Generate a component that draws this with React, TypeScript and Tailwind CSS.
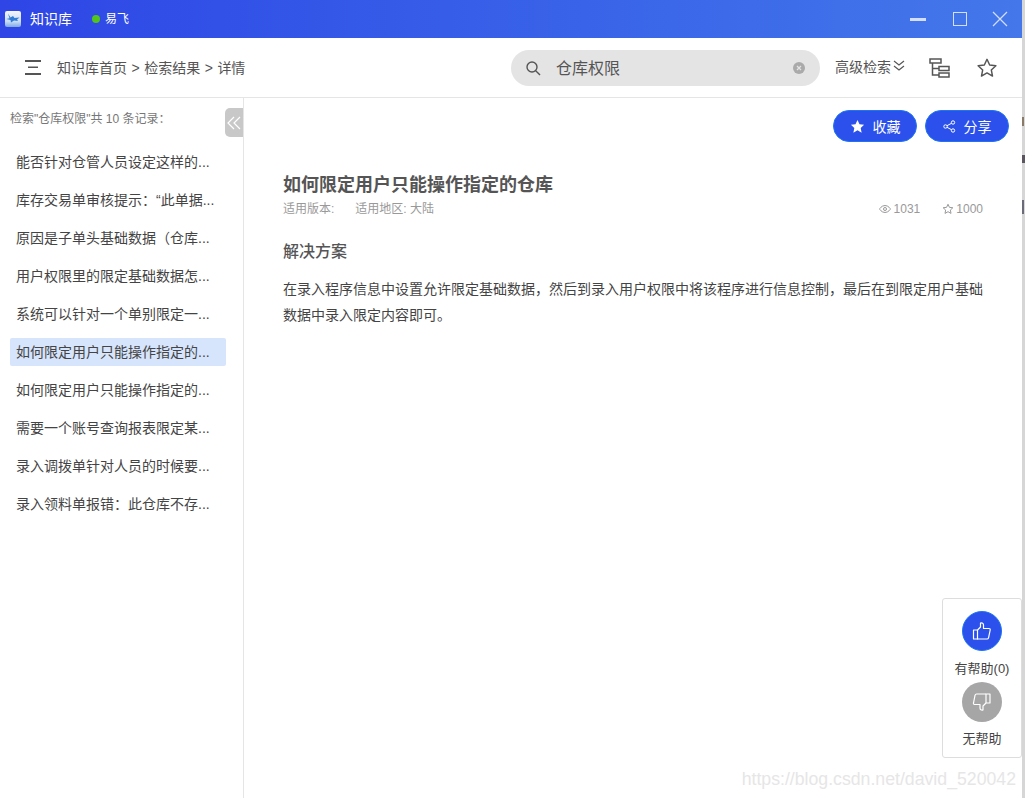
const results = [
  '能否针对仓管人员设定这样的...',
  '库存交易单审核提示：“此单据...',
  '原因是子单头基础数据（仓库...',
  '用户权限里的限定基础数据怎...',
  '系统可以针对一个单别限定一...',
  '如何限定用户只能操作指定的...',
  '如何限定用户只能操作指定的...',
  '需要一个账号查询报表限定某...',
  '录入调拨单针对人员的时候要...',
  '录入领料单报错：此仓库不存...',
]

function ThumbUp() {
  return (
    <svg width="20" height="20" viewBox="0 0 20 20" fill="none" stroke="white" strokeWidth="1.2" strokeLinejoin="round">
      <path d="M1.5 9h4v9h-4z" />
      <path d="M5.5 9l3-3V2c1.6-.6 3 .3 3 2v3.5h5.5c.9 0 1.4.7 1.2 1.5l-1.6 7.6c-.2.8-.7 1.4-1.6 1.4h-10" />
    </svg>
  )
}

function ThumbDown() {
  return (
    <svg width="20" height="20" viewBox="0 0 20 20" fill="none" stroke="white" strokeWidth="1.2" strokeLinejoin="round">
      <path d="M14 2h4v9h-4z" />
      <path d="M14 11l-3 3v4c-1.6.6-3-.3-3-2v-3.5H2.5c-.9 0-1.2-.7-1-1.5L3 3.4C3.2 2.6 3.7 2 4.6 2H14" />
    </svg>
  )
}

function StarOutline({ size, color, width }: { size: number; color: string; width: number }) {
  return (
    <svg width={size} height={size} viewBox="0 0 24 24" fill="none" stroke={color} strokeWidth={width} strokeLinejoin="round">
      <path d="M12 2.5l2.9 6.2 6.8.8-5 4.6 1.3 6.7-6-3.4-6 3.4 1.3-6.7-5-4.6 6.8-.8z" />
    </svg>
  )
}

export default function App() {
  return (
    <div className="relative h-[798px] w-[1025px] overflow-hidden bg-white font-['Liberation_Sans','Noto_Sans_CJK_SC',sans-serif] text-[14px] text-[#555]">
      <div className="flex h-full w-[1022px] flex-col">
        {/* title bar */}
        <div className="flex h-[38px] shrink-0 items-center bg-gradient-to-r from-[#2f45e6] to-[#4477ea] pr-[14px] pl-[5px] text-white">
          <svg width="16" height="16" viewBox="0 0 16 16">
            <defs>
              <linearGradient id="logo-bg" x1="0" y1="0" x2="0" y2="1">
                <stop offset="0" stopColor="#f2f5fb" />
                <stop offset="0.65" stopColor="#c9dcf5" />
                <stop offset="1" stopColor="#7ea8e6" />
              </linearGradient>
            </defs>
            <rect width="16" height="16" rx="2" fill="url(#logo-bg)" />
            <path d="M3 2.5l2.5 4 2.5-1.5 1.5 2 5-.5-2.5 2 1 1.5-4-.5-3 2-.5-2.5-4-1 3-.8z" fill="#2f7bd8" />
          </svg>
          <span className="ml-[9px]">知识库</span>
          <span className="ml-[20px] h-2 w-2 rounded-full bg-[#52c41a]" />
          <span className="ml-[5px] text-[12px]">易飞</span>
          <div className="ml-auto flex items-center">
            <span className="h-[3px] w-4 bg-[#d5def9]" />
            <span className="ml-[27px] h-[14px] w-[14px] border border-[#d5def9]" />
            <svg width="16" height="16" viewBox="0 0 16 16" stroke="#d5def9" strokeWidth="1.2" className="ml-[25px]">
              <path d="M1 1l14 14M15 1L1 15" />
            </svg>
          </div>
        </div>

        {/* nav bar */}
        <div className="flex h-[60px] shrink-0 items-center border-b border-[#e5e5e5] pl-[25px]">
          <svg width="17" height="15" viewBox="0 0 17 15" fill="#555">
            <rect width="16" height="2" y="0" />
            <rect width="10" height="1.5" y="6.5" x="3" />
            <rect width="16" height="2" y="13" />
          </svg>
          <div className="ml-[15px] flex w-[189px] shrink-0 gap-[4.5px] pt-[2px]">
            <span>知识库首页</span>
            <span>&gt;</span>
            <span>检索结果</span>
            <span>&gt;</span>
            <span>详情</span>
          </div>
          <div className="ml-[265px] flex h-9 w-[309px] shrink-0 items-center rounded-full bg-[#e4e4e4] pr-[15px] pl-[14px]">
            <svg width="16" height="16" viewBox="0 0 16 16" fill="none" stroke="#555" strokeWidth="1.4">
              <circle cx="7" cy="7" r="5" />
              <path d="M10.7 10.7L15 15" />
            </svg>
            <span className="ml-[15px] pt-[2px] text-[16px]">仓库权限</span>
            <span className="ml-auto flex h-3 w-3 items-center justify-center rounded-full bg-[#aaa]">
              <svg width="6" height="6" viewBox="0 0 6 6" stroke="#e4e4e4" strokeWidth="1.2">
                <path d="M1 1l4 4M5 1L1 5" />
              </svg>
            </span>
          </div>
          <span className="ml-[15px]">高级检索</span>
          <svg width="12" height="11" viewBox="0 0 12 11" fill="none" stroke="#555" strokeWidth="1.2" className="ml-[2px] -translate-y-[2px]">
            <path d="M1 1l5 4 5-4M1 6l5 4 5-4" />
          </svg>
          <svg width="21" height="20" viewBox="0 0 21 20" fill="none" stroke="#555" strokeWidth="1.5" className="ml-[24px]">
            <rect x="1" y="1" width="11" height="4" />
            <rect x="10" y="8.5" width="10" height="4" />
            <rect x="10" y="15" width="10" height="4" />
            <path d="M3.5 5v12H10M3.5 10.5H10" />
          </svg>
          <span className="ml-[26px] flex">
            <StarOutline size={22} color="#555" width={1.6} />
          </span>
        </div>

        <div className="flex min-h-0 flex-1">
          {/* results list */}
          <aside className="relative w-[244px] shrink-0 border-r border-[#e5e5e5] pt-[13px] pl-[10px]">
            <div className="text-[12px] leading-4 text-[#777]">检索"仓库权限"共 10 条记录：</div>
            <button className="absolute top-[10px] right-0 flex h-[29px] w-[18px] items-center justify-center rounded-l-[5px] bg-[#c8c8c8]">
              <svg width="14" height="14" viewBox="0 0 14 14" fill="none" stroke="white" strokeWidth="1.2">
                <path d="M7 1L1 7l6 6M13 1L7 7l6 6" />
              </svg>
            </button>
            <ul className="mt-[21px] w-[216px]">
              {results.map((title, i) => (
                <li
                  key={i}
                  className={`mb-[10px] h-7 truncate rounded-[2px] pl-[6px] leading-7 text-[#444] ${i === 5 ? 'bg-[#d6e4fc]' : ''}`}
                >
                  {title}
                </li>
              ))}
            </ul>
          </aside>

          {/* detail */}
          <main className="relative min-w-0 flex-1 pr-[38px] pl-[39px]">
            <div className="absolute top-[12px] right-[13px] flex gap-2">
              <button className="flex h-8 w-[84px] items-center justify-center gap-2 rounded-full border border-[#1d76f0] bg-[#2b50ec] text-white">
                <svg width="15" height="15" viewBox="0 0 24 24" fill="white">
                  <path d="M12 1.5l3.2 7 7.3.8-5.4 5 1.5 7.5-6.6-3.8-6.6 3.8 1.5-7.5-5.4-5 7.3-.8z" />
                </svg>
                <span className="pt-[2px]">收藏</span>
              </button>
              <button className="flex h-8 w-[84px] items-center justify-center gap-2 rounded-full border border-[#1d76f0] bg-[#2b50ec] text-white">
                <svg width="13" height="13" viewBox="0 0 13 13" fill="none" stroke="white" strokeWidth="1">
                  <circle cx="10" cy="2.5" r="1.7" />
                  <circle cx="2.5" cy="6.5" r="1.7" />
                  <circle cx="10" cy="10.5" r="1.7" />
                  <path d="M4 5.7l4.5-2.4M4 7.3l4.5 2.4" />
                </svg>
                <span className="pt-[2px]">分享</span>
              </button>
            </div>

            <h1 className="mt-[75px] text-[18px] leading-6 font-bold text-[#555]">如何限定用户只能操作指定的仓库</h1>
            <div className="mt-[4px] flex items-center pr-[1px] text-[12px] leading-4 text-[#999]">
              <span>适用版本:</span>
              <span className="ml-[21px]">适用地区: 大陆</span>
              <span className="ml-auto flex items-center gap-[3px]">
                <svg width="12" height="12" viewBox="0 0 24 24" fill="none" stroke="#999" strokeWidth="2">
                  <path d="M1 12s4-7 11-7 11 7 11 7-4 7-11 7-11-7-11-7z" />
                  <circle cx="12" cy="12" r="3" />
                </svg>
                1031
              </span>
              <span className="ml-[22px] flex items-center gap-[2px]">
                <StarOutline size={12} color="#999" width={2} />
                1000
              </span>
            </div>
            <h2 className="mt-[23px] text-[16px] leading-6 font-medium text-[#555]">解决方案</h2>
            <p className="mt-[12px] leading-[26px] text-[#444]">
              在录入程序信息中设置允许限定基础数据，然后到录入用户权限中将该程序进行信息控制，最后在到限定用户基础数据中录入限定内容即可。
            </p>
          </main>
        </div>
      </div>

      {/* window behind, right edge: only slivers of its text show */}
      <div className="absolute top-0 right-0 bottom-0 w-[3px] bg-[#d6d6d6]">
        <div className="mt-[117px] h-[9px] w-[2px] bg-[#8a7a68]" />
        <div className="mt-[29px] h-[8px] w-[3px] bg-[#5b5560]" />
        <div className="mt-[37px] h-[14px] w-[2px] bg-[#6a6a78]" />
      </div>

      {/* helpful widget */}
      <div className="absolute top-[598px] left-[942px] flex h-[160px] w-[80px] flex-col items-center rounded-[3px] border border-[#ddd] bg-white pt-[12px] text-[13px] text-[#444]">
        <span className="flex h-10 w-10 shrink-0 items-center justify-center rounded-full border border-[#1d76f0] bg-[#2b50ec]">
          <ThumbUp />
        </span>
        <span className="mt-[10px] leading-4 whitespace-nowrap">有帮助(0)</span>
        <span className="mt-[5px] flex h-10 w-10 shrink-0 items-center justify-center rounded-full bg-[#a6a6a6]">
          <ThumbDown />
        </span>
        <span className="mt-[9px] leading-4">无帮助</span>
      </div>

      {/* watermark */}
      <div className="absolute right-[9px] bottom-[9px] text-[17.7px] leading-5 text-[#e6e6e6]">
        https://blog.csdn.net/david_520042
      </div>
    </div>
  )
}
